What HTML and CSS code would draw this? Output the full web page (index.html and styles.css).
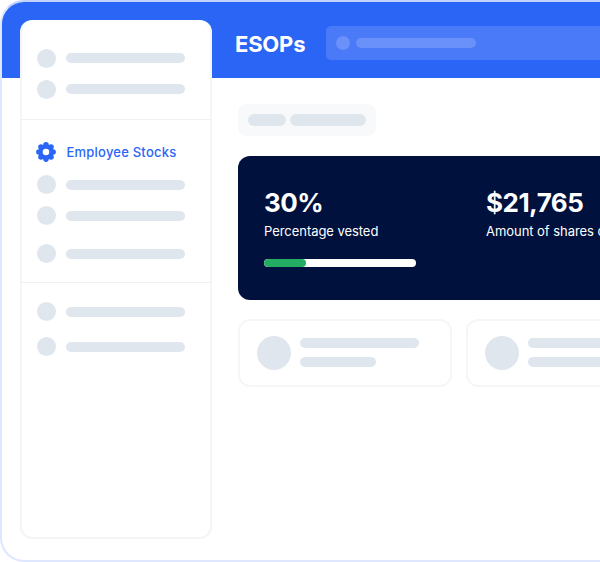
FILE: index.html
```html
<!DOCTYPE html>
<html lang="en">
<head>
<meta charset="utf-8">
<title>ESOPs</title>
<link rel="stylesheet" href="styles.css">
</head>
<body>
<div class="frame">
  <header class="topbar">
    <h1 class="brand">ESOPs</h1>
    <div class="search"><span class="search-dot"></span><span class="search-bar"></span></div>
  </header>
  <aside class="sidebar">
    <section class="side-group group-top">
      <div class="row"><span class="dot"></span><span class="bar"></span></div>
      <div class="row"><span class="dot"></span><span class="bar"></span></div>
    </section>
    <section class="side-group group-mid">
      <div class="row active">
        <svg class="gear" viewBox="0 0 20 20" aria-hidden="true">
          <g fill="#2b65f6">
            <circle cx="10" cy="10" r="7.6"/>
            <circle cx="10" cy="2.9" r="2.8"/>
            <circle cx="15" cy="5" r="2.8"/>
            <circle cx="17.1" cy="10" r="2.8"/>
            <circle cx="15" cy="15" r="2.8"/>
            <circle cx="10" cy="17.1" r="2.8"/>
            <circle cx="5" cy="15" r="2.8"/>
            <circle cx="2.9" cy="10" r="2.8"/>
            <circle cx="5" cy="5" r="2.8"/>
          </g>
          <circle cx="10" cy="10" r="3.3" fill="#fff"/>
        </svg>
        <span class="active-label">Employee Stocks</span>
      </div>
      <div class="row row-a"><span class="dot"></span><span class="bar"></span></div>
      <div class="row row-b"><span class="dot"></span><span class="bar"></span></div>
      <div class="row row-c"><span class="dot"></span><span class="bar"></span></div>
    </section>
    <section class="group-end">
      <div class="row"><span class="dot"></span><span class="bar"></span></div>
      <div class="row row-d"><span class="dot"></span><span class="bar"></span></div>
    </section>
  </aside>
  <main class="main">
    <div class="crumbs"><span class="crumb crumb-short"></span><span class="crumb crumb-long"></span></div>
    <section class="summary">
      <div class="stat stat-first">
        <div class="stat-value">30%</div>
        <div class="stat-label">Percentage vested</div>
        <div class="progress"><div class="progress-fill"></div></div>
      </div>
      <div class="stat">
        <div class="stat-value">$21,765</div>
        <div class="stat-label">Amount of shares outstanding</div>
      </div>
    </section>
    <section class="cards">
      <div class="card"><span class="avatar"></span><div class="lines"><span class="line line-long"></span><span class="line line-short"></span></div></div>
      <div class="card"><span class="avatar"></span><div class="lines"><span class="line line-long"></span><span class="line line-short"></span></div></div>
    </section>
  </main>
</div>
</body>
</html>
```
FILE: styles.css
```css
html, body {
  margin: 0;
  padding: 0;
  width: 600px;
  height: 562px;
  overflow: hidden;
  background: #fff;
}
* { box-sizing: border-box; }
.frame {
  width: 660px;
  height: 562px;
  border: 2px solid #dfe7ff;
  border-top-color: #c3d2fc;
  border-radius: 24px;
  overflow: hidden;
  display: grid;
  grid-template-columns: 210px 1fr;
  grid-template-rows: 76px 1fr;
  background: #fff;
  font-family: "Inter", "Liberation Sans", sans-serif;
}
.topbar {
  grid-column: 1 / -1;
  grid-row: 1;
  background: #2b65f6;
  display: flex;
  align-items: flex-start;
  padding: 24px 0 0 233px;
}
.brand {
  margin: 0;
  width: 91px;
  font-size: 22px;
  line-height: 36px;
  font-weight: 700;
  color: #fff;
  letter-spacing: -0.2px;
}
.search {
  flex: 1;
  height: 34px;
  border-radius: 5px;
  background: #4a7af7;
  display: flex;
  align-items: center;
  gap: 6px;
  padding-left: 10px;
}
.search-dot { width: 14px; height: 14px; border-radius: 50%; background: #6a91f9; }
.search-bar { width: 120px; height: 10px; border-radius: 5px; background: #6a91f9; }
.sidebar {
  grid-column: 1;
  grid-row: 1 / 3;
  margin: 18px 0 21.5px 18px;
  border: 2px solid #f4f5f7;
  border-top-color: #fff;
  border-radius: 12px;
  background: #fff;
  display: flex;
  flex-direction: column;
}
.side-group { border-bottom: 1px solid #eef0f3; margin: 0 -2px; padding-left: 17px; }
.group-top { height: 98px; padding-top: 26.5px; }
.group-mid { height: 163px; padding-top: 22px; }
.group-end { padding: 19px 0 0 15px; }
.row {
  display: flex;
  align-items: center;
  height: 19px;
  gap: 9.5px;
}
.row + .row { margin-top: 12px; }
.group-mid .row-a { margin-top: 14px; }
.group-mid .row-b { margin-top: 12px; }
.group-mid .row-c { margin-top: 19px; }
.group-end .row-d { margin-top: 16px; }
.dot { width: 19px; height: 19px; border-radius: 50%; background: #e0e6ee; flex: none; }
.bar { width: 119px; height: 10px; border-radius: 5px; background: #e0e6ee; }
.gear { width: 20px; height: 20px; flex: none; margin-left: -1px; }
.active-label { color: #2b65f6; font-size: 13px; font-weight: 500; letter-spacing: 0.22px; margin-left: 1px; white-space: nowrap; }
.main {
  grid-column: 2;
  grid-row: 2;
  padding: 26px 0 0 26px;
  min-width: 0;
}
.crumbs {
  width: 138px;
  height: 32px;
  border-radius: 8px;
  background: #f8f9fb;
  display: flex;
  align-items: center;
  gap: 4px;
  padding-left: 10px;
}
.crumb { height: 12px; border-radius: 6px; background: #e0e6ee; }
.crumb-short { width: 38px; }
.crumb-long { width: 76px; }
.summary {
  margin-top: 20px;
  height: 144px;
  width: 420px;
  border-radius: 12px 0 0 12px;
  background: #00113d;
  display: flex;
  padding: 30px 0 0 26px;
  color: #fff;
}
.stat { flex: none; }
.stat-first { width: 222px; }
.stat-value { font-size: 26px; line-height: 34px; font-weight: 700; letter-spacing: -0.5px; }
.stat-label { font-size: 13px; line-height: 18px; margin-top: 2px; white-space: nowrap; letter-spacing: -0.05px; }
.progress { margin-top: 19px; width: 152px; height: 8px; border-radius: 4px; background: #fff; overflow: hidden; }
.progress-fill { width: 42px; height: 8px; border-radius: 4px; background: #22ad62; }
.cards { margin-top: 19px; display: flex; gap: 14px; width: 480px; }
.card {
  flex: none;
  width: 213.5px;
  height: 67.5px;
  border: 2px solid #f5f6f8;
  border-radius: 12px;
  display: flex;
  align-items: center;
  gap: 9px;
  padding-left: 17px;
}
.avatar { width: 34px; height: 34px; border-radius: 50%; background: #e0e6ee; flex: none; }
.lines { display: flex; flex-direction: column; gap: 9px; }
.line { display: block; height: 10px; border-radius: 5px; background: #e0e6ee; }
.line-long { width: 119px; }
.line-short { width: 76px; }
```
